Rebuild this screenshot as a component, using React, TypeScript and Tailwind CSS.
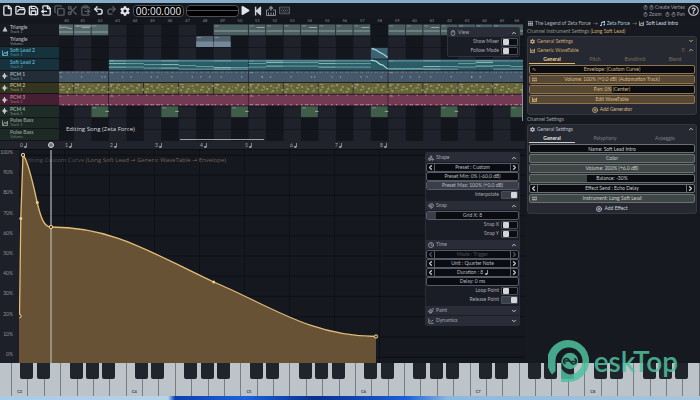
import type { ReactNode } from 'react';
import {
  ChevronDown,
  ChevronLeft,
  ChevronRight,
  ChevronUp,
  ChartLine,
  CirclePlus,
  ClipboardPaste,
  Clock,
  Copy,
  File,
  FileOutput,
  FolderOpen,
  Magnet,
  Mouse,
  Paintbrush,
  Redo2,
  Save,
  Scissors,
  Shapes,
  Undo2,
} from 'lucide-react';
import { FaCog, FaPlay, FaStepBackward, FaTh, FaMusic, FaRegKeyboard, FaRegQuestionCircle } from 'react-icons/fa';

type Tone = 'gray' | 'gold' | 'green';

const BORDER: Record<Tone, string> = {
  gray: 'border-[#555a64]',
  gold: 'border-[#8f744c]',
  green: 'border-[#69726e]',
};
const FILL: Record<Tone, string> = {
  gray: 'bg-[#3a3e48]',
  gold: 'bg-[#574834]',
  green: 'bg-[#3f4746]',
};
const TEXT: Record<Tone, string> = {
  gray: 'text-[#b9bcc2]',
  gold: 'text-[#dcbd84]',
  green: 'text-[#c9cecb]',
};

/* ---------- toolbar ---------- */

const TOOLS = [
  { label: 'New', icon: File, on: true },
  { label: 'Open', icon: FolderOpen, on: true },
  { label: 'Save', icon: Save, on: true },
  { label: 'Export', icon: FileOutput, on: true },
  { label: 'Copy', icon: Copy, on: false },
  { label: 'Cut', icon: Scissors, on: false },
  { label: 'Paste', icon: ClipboardPaste, on: false },
  { label: 'Undo', icon: Undo2, on: true },
  { label: 'Redo', icon: Redo2, on: false },
];

function Toolbar() {
  return (
    <header className="flex h-[15px] shrink-0 items-center bg-[#15181f] pl-[1px] pr-[1px]">
      {TOOLS.map(({ label, icon: Icon, on }) => (
        <button key={label} aria-label={label} className={`flex w-[13px] justify-center ${on ? 'text-[#dfe2e6]' : 'text-[#575b63]'}`}>
          <Icon size={11} strokeWidth={3} />
        </button>
      ))}
      <button aria-label="Settings" className="flex w-[13px] justify-center text-[#e3e5e8]">
        <FaCog size={10} />
      </button>
      <div className="ml-[2px] flex h-3 w-[51px] items-center justify-center rounded-sm border border-[#4b4f58] bg-black font-['Open_Sans',sans-serif] text-[10px] leading-none text-[#eceef0]">
        00:00.000
      </div>
      <div className="ml-[2px] flex h-3 w-[53px] flex-col justify-center rounded-sm border border-[#4b4f58] bg-black">
        <div className="h-px bg-[#4b4f58]" />
      </div>
      <button aria-label="Play" className="ml-[2px] text-[#e3e5e8]">
        <FaPlay size={9} />
      </button>
      <button aria-label="Rewind" className="ml-[3px] text-[#cfd2d6]">
        <FaStepBackward size={10} />
      </button>
      <button aria-label="Record" className="ml-[3px] text-[#85898f]">
        <svg width="10" height="10" viewBox="0 0 20 20" fill="none" stroke="currentColor" strokeWidth="2">
          <path d="M6 8H1v11h18V8h-5M5 19v-6M10 19v-6M15 19v-6" />
          <path d="M10 0v9M6 4h8" strokeWidth="3" />
        </svg>
      </button>
      <button aria-label="Keyboard" className="ml-[3px] text-[#6a6e76]">
        <FaRegKeyboard size={11} />
      </button>
      <div className="ml-auto mr-[3px] text-[5px] leading-[7px] text-[#9a9da3]">
        <div className="flex items-center gap-[1px]">
          <Mouse size={5} strokeWidth={3} />
          <Mouse size={5} strokeWidth={3} />
          <span>Create Vertex</span>
        </div>
        <div className="flex items-center gap-[1px]">
          <Mouse size={5} strokeWidth={3} />
          <span className="mr-[2px]">Zoom</span>
          <Mouse size={5} strokeWidth={3} />
          <Mouse size={5} strokeWidth={3} />
          <span>Pan</span>
        </div>
      </div>
      <button aria-label="Help" className="text-[#c5c8cc]">
        <FaRegQuestionCircle size={11} />
      </button>
    </header>
  );
}

/* ---------- shared controls ---------- */

function Toggle({ label, on = false }: { label: string; on?: boolean }) {
  return (
    <label className="flex h-[9px] items-center justify-end gap-[2px] pr-px text-[5px] leading-none text-[#a9acb3]">
      {label}
      <input
        type="checkbox"
        defaultChecked={on}
        className="relative h-2 w-[17px] appearance-none rounded-[1px] border border-[#4a4e58] bg-[#0b0d12] before:absolute before:left-px before:top-0 before:h-[6px] before:w-[6px] before:rounded-[1px] before:bg-[#d3d5d9] checked:bg-[#3a3e48] checked:before:left-[9px]"
      />
    </label>
  );
}

function Stepper({ text, tone, off = false, icon }: { text: string; tone: Tone; off?: boolean; icon?: ReactNode }) {
  return (
    <div className={`flex h-[9px] items-stretch rounded-[2px] border bg-[#0a0c11] text-[5px] leading-none ${BORDER[tone]} ${off ? 'text-[#4b4e56]' : TEXT[tone]}`}>
      <button aria-label={`Previous ${text}`} className={`flex w-2 items-center justify-center border-r ${BORDER[tone]}`}>
        <ChevronLeft size={7} strokeWidth={5} />
      </button>
      <span className="flex flex-1 items-center justify-center gap-[2px]">
        {text}
        {icon}
      </span>
      <button aria-label={`Next ${text}`} className={`flex w-2 items-center justify-center border-l ${BORDER[tone]}`}>
        <ChevronRight size={7} strokeWidth={5} />
      </button>
    </div>
  );
}

function SliderRow({ text, value, tone, icon }: { text: string; value: number; tone: Tone; icon?: ReactNode }) {
  return (
    <label className={`relative flex h-[9px] items-center justify-center overflow-hidden rounded-[2px] border bg-[#0a0c11] text-[5px] leading-none ${BORDER[tone]} ${TEXT[tone]}`}>
      <span className={`absolute inset-y-0 left-0 ${FILL[tone]}`} style={{ width: `${value}%` }} />
      {icon && <span className="absolute left-[2px]">{icon}</span>}
      <span className="relative">{text}</span>
      <input type="range" defaultValue={value} className="absolute inset-0 w-full opacity-0" />
    </label>
  );
}

function ButtonRow({ text, tone, dark = false, icon }: { text: string; tone: Tone; dark?: boolean; icon?: ReactNode }) {
  return (
    <button className={`relative flex h-[9px] items-center justify-center rounded-[2px] border text-[5px] leading-none ${BORDER[tone]} ${TEXT[tone]} ${dark ? 'bg-[#0a0c11]' : FILL[tone]}`}>
      {icon && <span className="absolute left-[2px]">{icon}</span>}
      {text}
    </button>
  );
}

function SectionHeader({ icon, title, open = true }: { icon: ReactNode; title: string; open?: boolean }) {
  return (
    <button className="flex h-[9px] w-full items-center gap-[2px] bg-[#2a2d37] px-[2px] text-[5px] leading-none text-[#a6a9b1]">
      {icon}
      <span>{title}</span>
      <span className="ml-auto text-[#c9cbd0]">{open ? <ChevronUp size={6} strokeWidth={4} /> : <ChevronDown size={6} strokeWidth={4} />}</span>
    </button>
  );
}

function WaveIcon({ size = 6 }: { size?: number }) {
  return (
    <svg width={size} height={size} viewBox="0 0 12 12" fill="none" stroke="currentColor" strokeWidth="2">
      <path d="M1 1v10h10V2L8 8 5.5 4 2 10" />
    </svg>
  );
}

function QuarterNote() {
  return (
    <svg width="3" height="5" viewBox="0 0 6 10" fill="currentColor">
      <ellipse cx="2.5" cy="8" rx="2.5" ry="2" />
      <rect x="4" y="0" width="1.5" height="8" />
    </svg>
  );
}

/* ---------- song arrangement ---------- */

const TRACKS = [
  { name: 'Triangle', sub: 'Track 1', mark: 'tri', bg: 'bg-[#191b22]', text: 'text-[#a4a7ad]' },
  { name: 'Triangle', sub: 'Volume', mark: '', bg: 'bg-[#191b22]', text: 'text-[#a4a7ad]' },
  { name: 'Soft Lead 2', sub: 'Track 1', mark: 'wave', bg: 'bg-[#16333d]', text: 'text-[#5aa6bf]' },
  { name: 'Soft Lead 2', sub: 'Track 2', mark: '', bg: 'bg-[#16333d]', text: 'text-[#5aa6bf]' },
  { name: 'PCM 1', sub: 'Track 1', mark: 'pcm', bg: 'bg-[#222d38]', text: 'text-[#9fabb5]' },
  { name: 'PCM 2', sub: 'Track 1', mark: 'pcm', bg: 'bg-[#34351f]', text: 'text-[#b3b382]' },
  { name: 'PCM 3', sub: 'Track 1', mark: 'pcm', bg: 'bg-[#471f33]', text: 'text-[#bd7f98]' },
  { name: 'PCM 4', sub: 'Track 1', mark: 'pcm', bg: 'bg-[#1e2d27]', text: 'text-[#96a99d]' },
  { name: 'Pulse Bass', sub: 'Track 1', mark: 'wave', bg: 'bg-[#1c2924]', text: 'text-[#86948c]' },
  { name: 'Pulse Bass', sub: 'Volume', mark: '', bg: 'bg-[#1c2924]', text: 'text-[#86948c]' },
];

function TrackMark({ mark }: { mark: string }) {
  if (mark === 'wave') return <WaveIcon size={6} />;
  return (
    <svg width="6" height="6" viewBox="0 0 12 12" fill="#c3c6ca">
      {mark === 'tri' && <path d="M6 1l5 10H1z" />}
      {mark === 'pcm' && <path d="M0 5h2V3h2V0h2v3h2v2h3v2H8v2H6v3H4V9H2V7H0z" />}
    </svg>
  );
}

const BAR = 17.5;
const ROW = 11.7;
const barX = (bar: number) => (bar - 40) * BAR - 2.5;
const BARS = Array.from({ length: 27 }, (_, i) => 40 + i);

// the first and last bars are cut by the edges of the view
const barShare = (bar: number) => (bar === 40 ? 0.857 : bar === 66 ? 0.714 : 1);

// [row, first bar, end bar, colour]
const CLIPS: [number, number, number, string][] = [
  [0, 40, 41, '#53676a'], [0, 41, 42, '#53676a'], [0, 42, 43, '#53676a'],
  [0, 49, 51, '#4a5d60'], [0, 51, 52, '#4a5d60'], [0, 52, 53, '#4a5d60'], [0, 53, 54, '#4a5d60'],
  [0, 54, 55, '#4a5d60'], [0, 55, 56, '#4a5d60'], [0, 56, 57, '#4a5d60'], [0, 57, 58, '#4a5d60'],
  [0, 59, 60, '#4a5d60'], [0, 60, 61, '#4a5d60'], [0, 61, 62, '#4a5d60'], [0, 62, 63, '#4a5d60'],
  [0, 63, 64, '#4a5d60'], [0, 64, 65, '#4a5d60'], [0, 65, 67, '#4a5d60'],
  [1, 48, 49, '#52616e'], [1, 49, 50, '#52616e'],
  [2, 58, 59, '#3b6272'],
  [3, 43, 51, '#2c5b68'], [3, 51, 59, '#2c5b68'], [3, 59, 67, '#2c5b68'],
  [4, 40, 43, '#46586a'], [4, 43, 51, '#46586a'], [4, 51, 59, '#46586a'], [4, 59, 67, '#46586a'],
  [6, 40, 43, '#743a54'], [6, 43, 51, '#743a54'], [6, 51, 59, '#743a54'], [6, 59, 67, '#743a54'],
  ...[40, 41, 43, 45, 47, 49, 51, 53, 55, 57, 59, 61, 63, 65].map(
    (b): [number, number, number, string] => [5, b, b === 40 ? 41 : b + 2, '#66653a'],
  ),
  ...[42, 46, 50, 54, 58, 62, 66].map((b): [number, number, number, string] => [7, b, b + 1, '#3f5d49']),
];

// note heights inside the long lead clips, one entry per bar from 43
const LEAD = [3, 3, 4, 4, 5, 6, 7, 7, 3, 2, 2, 2, 3, 3, 3, 99, 8, 8, 6, 6, 3, 2, 5, 6];

function Arrangement() {
  const notes: ReactNode[] = [];
  BARS.forEach((bar) => {
    const x = barX(bar);
    for (let k = 0; k < 6; k++) {
      const nx = x + k * 2.9 + ((bar * 3 + k) % 2);
      notes.push(<rect key={`a${bar}-${k}`} x={nx} y={4 * ROW + 1} width="1.2" height="0.8" fill="#7f92a1" />);
      notes.push(<rect key={`b${bar}-${k}`} x={nx} y={5 * ROW + 2 + ((k * 5 + bar * 3) % 8)} width="2.2" height="0.9" fill="#bdbd86" />);
      notes.push(<rect key={`d${bar}-${k}`} x={nx + 1} y={5 * ROW + 3 + ((k * 3 + bar) % 7)} width="1.2" height="0.8" fill="#a3a36d" />);
      if (k % 2 === 0 || bar % 3 === 0) notes.push(<rect key={`c${bar}-${k}`} x={nx} y={7 * ROW - 1.6} width="1.5" height="0.9" fill="#d3a3b4" />);
      if (k % 3 === 0) notes.push(<rect key={`f${bar}-${k}`} x={nx + 1} y={6 * ROW + 0.6} width="1.5" height="0.8" fill="#c08ba0" />);
    }
    notes.push(<rect key={`g${bar}`} x={x + 4 + (bar % 4) * 3} y={4 * ROW + 5.5} width="1.2" height="1.2" fill="#9aabb6" />);
    if (bar % 3 === 0) notes.push(<rect key={`h${bar}`} x={x + 13} y={4 * ROW + 5.5} width="1.2" height="1.2" fill="#9aabb6" />);
  });

  return (
    <svg viewBox="0 0 465 117" preserveAspectRatio="none" className="h-full w-full">
      <rect width="465" height="117" fill="#14161d" />
      {BARS.map((bar) => bar % 2 === 1 && <rect key={bar} x={barX(bar)} width={BAR} height="117" fill="#20222b" />)}
      {TRACKS.map((_, i) => <rect key={i} y={i * ROW} width="465" height="0.6" fill="#0f1117" />)}
      {CLIPS.map(([row, from, to, color], i) => (
        <g key={i}>
          <rect x={barX(from)} y={row * ROW + 0.4} width={(to - from) * BAR - 0.6} height={ROW - 0.8} fill={color} />
          <rect x={barX(from) + 1} y={row * ROW + 1.4} width="4" height="1" fill="#ffffff" opacity="0.3" />
        </g>
      ))}
      {notes}
      {[42, 46, 50, 54, 58, 62, 66].map((b) => <rect key={b} x={barX(b) + 14} y={7 * ROW + 5} width="3.5" height="1" fill="#92ab94" />)}
      {CLIPS.filter(([row]) => row === 0).map(([, from, to], i) => (
        <path
          key={i}
          d={`M${barX(from) + 0.5} ${i < 3 ? 8 : 7}H${barX(to) - 1}${i % 3 === 1 ? `M${barX(from) + 8} 3.5h8` : ''}`}
          stroke="#96aba7"
          strokeWidth="0.9"
        />
      ))}
      <path d="M0 4l6 -1l7 2M17 2h16" stroke="#a8bab5" strokeWidth="0.8" fill="none" />
      {[48, 49].map((b) => <rect key={b} x={barX(b)} y="17.5" width="17" height="5.5" fill="#75889a" />)}
      {LEAD.map((h, i) => {
        const x = barX(43 + i);
        if (h === 99) return <path key={i} d={`M${x} ${3 * ROW + 1}l5 1l4 3l3 1l5 4`} stroke="#acd6cf" strokeWidth="1.2" fill="none" />;
        return (
          <path
            key={i}
            d={`M${x} ${3 * ROW + 1.8}h${BAR}M${x} ${3 * ROW + 1.5 + h}h${BAR}M${x} ${3 * ROW + 2 + Math.min(h + 3, 8)}h${BAR}`}
            stroke={i % 3 === 0 ? '#9acbc4' : '#72a9a8'}
            strokeWidth="0.9"
          />
        );
      })}
      <path d={`M${barX(58) + 1} ${2 * ROW + 1}l5 2l3 2l4 2l4 3`} stroke="#a9cbd3" strokeWidth="1.2" fill="none" />
    </svg>
  );
}

function ViewPanel() {
  return (
    <div className="absolute right-[5px] top-[9px] w-[73px] rounded-[2px] border border-[#2f323c] bg-[#1a1d25] pb-px">
      <SectionHeader icon={<Mouse size={6} strokeWidth={3} />} title="View" />
      <Toggle label="Show Mixer" />
      <Toggle label="Follow Mode" />
    </div>
  );
}

function SongEditor() {
  return (
    <section className="flex h-[123px] shrink-0 bg-[#14161d]">
      <ul className="flex w-[59px] shrink-0 flex-col pt-[6px]">
        {TRACKS.map((t, i) => (
          <li key={i} className={`flex min-h-0 flex-1 items-center gap-[2px] border-b border-[#12141a] pl-[2px] ${t.bg} ${t.text}`}>
            <TrackMark mark={t.mark} />
            <div>
              <div className="text-[5px] font-bold leading-[5px]">{t.name}</div>
              <div className="text-[4px] leading-[4px] opacity-80">{t.sub}</div>
            </div>
          </li>
        ))}
      </ul>
      <div className="relative flex min-w-0 flex-1 flex-col pr-[2px]">
        <div className="flex h-[6px] shrink-0 overflow-hidden text-[4px] leading-[6px] text-[#8b8e95]">
          {BARS.map((bar) => (
            <span key={bar} className="min-w-0 text-center" style={{ flex: barShare(bar) }}>
              {bar}
            </span>
          ))}
        </div>
        <div className="min-h-0 flex-1">
          <Arrangement />
        </div>
        <div className="absolute bottom-[8px] left-[7px] font-['Open_Sans',sans-serif] text-[6px] leading-[8px] text-[#d9dbdf]">
          Editing Song (Zeta Force)
        </div>
        <div className="absolute bottom-px left-[26%] h-px w-[18%] bg-[#9a9da4]" />
        <div className="absolute bottom-5 right-[2px] h-9 w-px bg-[#8d9199]" />
        <ViewPanel />
      </div>
    </section>
  );
}

/* ---------- envelope curve ---------- */

const LEVELS = [100, 90, 80, 70, 60, 50, 40, 30, 20, 10, 0];
const CURVE = 'M19.5 316L20.8 218L23 155C28 160 33 183 37.3 203C41 218 44 227 51 227C112 227 150 252 213.7 282C265 303 310 336.5 376 336.5';

function CurveGraph() {
  return (
    <svg viewBox="19 150 506 213" preserveAspectRatio="none" className="absolute inset-0 h-full w-full">
      <path d={`${CURVE}V363H19V316z`} fill="#675236" />
      <path d={CURVE} fill="none" stroke="#e3bd78" strokeWidth="1.3" />
      <path d="M51 150V363" stroke="#b9b9b8" strokeWidth="1.2" />
      {[[19.5, 316], [23, 155], [51, 227], [376, 336.5]].map(([x, y]) => (
        <circle key={x} cx={x} cy={y} r="1.7" fill="#4a3b26" stroke="#f0d090" strokeWidth="1" />
      ))}
      {[[20.8, 218.5], [37.3, 202.5], [213.7, 282]].map(([x, y]) => (
        <circle key={x} cx={x} cy={y} r="1.5" fill="#f0cd8a" />
      ))}
    </svg>
  );
}

function CurveGrid() {
  return (
    <svg viewBox="19 150 506 213" preserveAspectRatio="none" className="absolute inset-0 h-full w-full">
      {LEVELS.map((l) => <rect key={l} x="19" y={356.5 - l * 2.02} width="506" height={l % 100 ? 1 : 1.4} fill="#0e1016" />)}
      {[64, 109, 154, 199, 244, 289, 334, 379].map((x) => <rect key={x} x={x} y="150" width="1" height="213" fill="#0e1016" />)}
    </svg>
  );
}

function ShapePanel() {
  return (
    <div className="absolute right-[5px] top-[2px] flex w-[95px] flex-col gap-[2px] rounded-[2px] border border-[#2a2d37] bg-[#1a1d25]">
      <div className="flex flex-col">
        <SectionHeader icon={<Shapes size={6} strokeWidth={3} />} title="Shape" />
        <div className="h-px" />
        <Stepper text="Preset : Custom" tone="gray" />
        <SliderRow text="Preset Min: 0% (-60.0 dB)" value={0} tone="gray" />
        <SliderRow text="Preset Max: 100% (+0.0 dB)" value={100} tone="gray" />
        <Toggle label="Interpolate" on />
      </div>
      <div className="flex flex-col">
        <SectionHeader icon={<Magnet size={6} strokeWidth={3} />} title="Snap" />
        <div className="h-px" />
        <SliderRow text="Grid X: 8" value={10} tone="gray" />
        <Toggle label="Snap X" />
        <Toggle label="Snap Y" />
      </div>
      <div className="flex flex-col">
        <SectionHeader icon={<Clock size={6} strokeWidth={3} />} title="Time" />
        <div className="h-px" />
        <Stepper text="Mode : Trigger" tone="gray" off />
        <Stepper text="Unit : Quarter Note" tone="gray" />
        <Stepper text="Duration : 8" tone="gray" icon={<QuarterNote />} />
        <ButtonRow text="Delay: 0 ms" tone="gray" dark />
        <Toggle label="Loop Point" />
        <Toggle label="Release Point" on />
      </div>
      <div className="flex flex-col gap-px">
        <SectionHeader icon={<Paintbrush size={6} strokeWidth={3} />} title="Paint" open={false} />
        <SectionHeader icon={<ChartLine size={6} strokeWidth={3} />} title="Dynamics" open={false} />
      </div>
    </div>
  );
}

function CurveEditor() {
  return (
    <section className="flex min-h-0 flex-1 flex-col bg-[#15181f]">
      <div className="relative flex h-[9px] shrink-0 border-b border-[#0c0e13] bg-[#20232c] pl-5 text-[5px] leading-[8px] text-[#a3a6ad]">
        {[0, 1, 2, 3, 4, 5, 6, 7, 8].map((n) => (
          <span key={n} className="flex w-[45px] shrink-0 items-center gap-px">
            {n}
            <QuarterNote />
          </span>
        ))}
        <span className="absolute left-12 top-px h-[6px] w-[6px] rounded-full border border-[#d6d8dc] bg-[#70747c]" />
      </div>
      <div className="flex min-h-0 flex-1">
        <div className="flex w-[19px] shrink-0 flex-col justify-between bg-[#1d2028] pb-[6px] pr-[6px] text-right text-[5px] leading-[5px] text-[#8f9299]">
          {LEVELS.map((l) => (
            <span key={l}>{l}%</span>
          ))}
        </div>
        <div className="relative min-w-0 flex-1">
          <CurveGrid />
          <div className="absolute left-[5px] top-[6px] whitespace-nowrap font-['Open_Sans','DejaVu_Sans',sans-serif] text-[6px] leading-[8px] text-[#4e5057]">
            Editing Custom Curve <span className="text-[#75634a]">(Long Soft Lead → Generic WaveTable → Envelope)</span>
          </div>
          <CurveGraph />
          <ShapePanel />
        </div>
      </div>
    </section>
  );
}

/* ---------- instrument settings ---------- */

function Tabs({ names, tone }: { names: string[]; tone: Tone }) {
  const active = tone === 'gold' ? 'border-[#e0b768] text-[#f0d193]' : 'border-[#c6cfca] text-[#e6e9e7]';
  const idle = tone === 'gold' ? 'text-[#7d6d52]' : 'text-[#797e80]';
  return (
    <div role="tablist" className="flex h-[9px] text-[5px] leading-none">
      {names.map((n, i) => (
        <button
          key={n}
          role="tab"
          aria-selected={i === 0}
          className={i === 0 ? `w-[46px] border-b font-bold ${active}` : `flex-1 ${idle}`}
        >
          {n}
        </button>
      ))}
    </div>
  );
}

function Card({ children }: { children: ReactNode }) {
  return <div className="flex flex-col gap-px rounded-[3px] border border-[#343741] bg-[#262932] px-px">{children}</div>;
}

function CardTitle({ icon, title, open, tone, grip = false }: { icon: ReactNode; title: string; open: boolean; tone: Tone; grip?: boolean }) {
  return (
    <button className={`flex h-2 items-center gap-[2px] px-px text-[5px] leading-none ${tone === 'gold' ? 'text-[#c9a973]' : 'text-[#bcbfc4]'}`}>
      {icon}
      <span>{title}</span>
      <span className="ml-auto flex items-center gap-[3px]">
        {grip && <span className="text-[5px] opacity-60">⠿</span>}
        {open ? <ChevronUp size={6} strokeWidth={4} /> : <ChevronDown size={6} strokeWidth={4} />}
      </span>
    </button>
  );
}

function InstrumentPanel() {
  return (
    <aside className="w-1/4 shrink-0 bg-[#161920] px-[3px] pl-[2px] pt-[1px]">
      <nav className="flex h-2 items-center gap-[2px] px-px text-[5px] leading-none text-[#aeb1b7]">
        <FaTh size={5} />
        <a href="#song">The Legend of Zeta Force</a>
        <span>→</span>
        <FaMusic size={5} className="text-[#cfe0ee]" />
        <a href="#zeta" className="text-[#a9c8dd]">Zeta Force</a>
        <span>→</span>
        <WaveIcon size={5} />
        <a href="#lead" className="text-[#dcdee2]">Soft Lead Intro</a>
      </nav>
      <h2 className="h-[9px] text-[5px] leading-[9px] text-[#9a9589]">
        Channel Instrument Settings <span className="text-[#cfae75]">(Long Soft Lead)</span>
      </h2>
      <Card>
        <CardTitle icon={<FaCog size={5} />} title="General Settings" open={false} tone="gold" />
        <CardTitle icon={<WaveIcon size={5} />} title="Generic WaveTable" open tone="gold" grip />
        <Tabs names={['General', 'Pitch', 'Bandlimit', 'Blend']} tone="gold" />
        <ButtonRow text="Envelope: (Custom Curve)" tone="gold" dark icon={<span className="block leading-none">∿</span>} />
        <SliderRow text="Volume: 100% (+0.0 dB) (Automation Track)" value={100} tone="gold" icon={<FaRegKeyboard size={5} />} />
        <SliderRow text="Pan: 0% (Center)" value={50} tone="gold" />
        <ButtonRow text="Edit WaveTable" tone="gold" icon={<WaveIcon size={5} />} />
        <button className="flex h-[9px] items-center justify-center gap-[2px] text-[5px] leading-none text-[#d9ba80]">
          <CirclePlus size={6} strokeWidth={3} />
          Add Generator
        </button>
      </Card>
      <h2 className="h-[9px] text-[5px] leading-[9px] text-[#9fa2a8]">Channel Settings</h2>
      <Card>
        <CardTitle icon={<FaCog size={5} />} title="General Settings" open tone="green" />
        <Tabs names={['General', 'Polyphony', 'Arpeggio']} tone="green" />
        <input
          aria-label="Name"
          defaultValue="Name: Soft Lead Intro"
          className="h-[9px] w-full rounded-[2px] border border-[#69726e] bg-[#0a0c11] text-center text-[5px] leading-none text-[#c9cecb]"
        />
        <ButtonRow text="Color" tone="green" />
        <SliderRow text="Volume: 200% (+6.0 dB)" value={100} tone="green" />
        <SliderRow text="Balance: -30%" value={35} tone="green" />
        <Stepper text="Effect Send : Echo Delay" tone="green" />
        <ButtonRow text="Instrument: Long Soft Lead" tone="green" icon={<FaRegKeyboard size={5} />} />
        <button className="flex h-[9px] items-center justify-center gap-[2px] text-[5px] leading-none text-[#cfd2d6]">
          <CirclePlus size={6} strokeWidth={3} />
          Add Effect
        </button>
      </Card>
    </aside>
  );
}

/* ---------- piano ---------- */

const KEYS = Array.from({ length: 43 }, (_, i) => (i + 6) % 7); // 0 = C, 6 = B

function Piano() {
  return (
    <div className="flex h-[33px] shrink-0 overflow-hidden bg-[#bcc3c9]">
      {KEYS.map((note, i) => {
        const hasSharp = note !== 2 && note !== 6;
        return (
          <div key={i} className="relative flex min-w-0 items-end justify-center border-r border-[#767d85] pb-[2px]" style={{ flex: i === 0 ? 0.715 : 1 }}>
            {note === 0 && <span className="text-[4px] font-bold leading-[5px] text-[#3a4048]">C{3 + (i - 1) / 7}</span>}
            {hasSharp && <span className="absolute -right-[6px] top-0 z-10 h-4 w-[13px] rounded-b-[2px] bg-[#20242c]" />}
          </div>
        );
      })}
    </div>
  );
}

function Watermark() {
  return (
    <div className="pointer-events-none absolute bottom-[17px] right-[22px] z-20 flex items-start gap-[2px] text-[#4fc09e] opacity-85">
      <svg width="44" height="44" viewBox="0 0 44 44">
        <path d="M4 35.5A21 21 0 1 1 20 43H13V22.5A8.8 8.8 0 0 1 13.5 19.5V29.5A11.5 11.5 0 0 0 22 35.5A13.5 13.5 0 1 0 7.5 22V32z" fill="currentColor" />
        <circle cx="22" cy="22" r="8.2" fill="currentColor" />
        <path
          d="M17 24.5A2.7 2.7 0 1 1 20.5 20.5L23.5 24A2.7 2.7 0 1 0 27 20M17.5 22H20M24 22.5H26.5"
          fill="none"
          stroke="#1b2a2a"
          strokeWidth="1.7"
          strokeLinecap="round"
        />
      </svg>
      <span className="pt-[5px] font-['Lato',sans-serif] text-[28px] font-semibold leading-[34px]">eskTop</span>
    </div>
  );
}

export default function App() {
  return (
    <div className="relative flex h-screen flex-col overflow-hidden bg-[#15181f] font-['Lato','DejaVu_Sans',sans-serif]">
      <div className="h-[3px] shrink-0 bg-[#86aecb]" />
      <Toolbar />
      <main className="flex min-h-0 flex-1">
        <div className="flex min-w-0 flex-1 flex-col">
          <SongEditor />
          <CurveEditor />
        </div>
        <InstrumentPanel />
      </main>
      <Piano />
      <div className="h-1 shrink-0 bg-[linear-gradient(90deg,#a9c9e6_0%,#b7d3ea_24%,#0c3fae_25%,#1c62dc_35%,#0a2f8f_45%,#1b5fd8_58%,#8db8de_64%,#a9c6dc_100%)]" />
      <Watermark />
    </div>
  );
}
